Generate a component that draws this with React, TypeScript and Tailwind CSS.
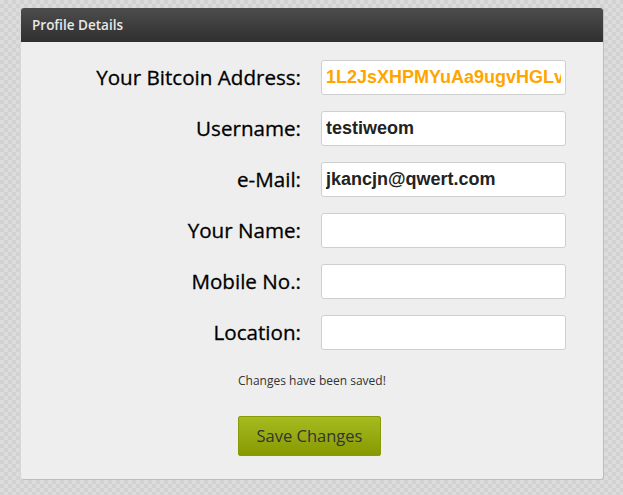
const fields = [
  { label: "Your Bitcoin Address:", value: "1L2JsXHPMYuAa9ugvHGLvJ", orange: true },
  { label: "Username:", value: "testiweom" },
  { label: "e-Mail:", value: "jkancjn@qwert.com" },
  { label: "Your Name:", value: "" },
  { label: "Mobile No.:", value: "" },
  { label: "Location:", value: "" },
];

function App() {
  return (
    <div className="min-h-[495px] w-full bg-[repeating-conic-gradient(#d2d2d2_0_25%,#dcdcdc_0_50%)] bg-[length:8px_8px] pt-2 pl-[21px] font-['Open_Sans',sans-serif]">
      <div className="w-[583px] rounded-[3px] border-r border-b border-[#bdbdbd] bg-[#eeeeee]">
        <div className="flex h-[34px] items-center rounded-t-[3px] bg-gradient-to-b from-[#4d4d4d] to-[#2f2f2f] pl-[11px]">
          <span className="text-[13.5px] font-semibold text-[#e8e8e8]">Profile Details</span>
        </div>
        <form className="flex flex-col pt-[18px] pb-[23px]" onSubmit={(e) => e.preventDefault()}>
          <div className="flex flex-col gap-[16px]">
            {fields.map((f) => (
              <div key={f.label} className="flex items-center">
                <label className="w-[280px] text-right text-[20.6px] text-black [-webkit-text-stroke:0.3px_#000]">{f.label}</label>
                <input
                  type="text"
                  defaultValue={f.value}
                  className={
                    "ml-[20px] h-[35px] w-[245px] rounded-[3px] border border-[#cfcfcf] bg-white px-[4px] font-['Liberation_Sans',Arial,sans-serif] text-[18px] font-bold outline-none " +
                    (f.orange ? "text-[#ffa500]" : "text-[#222]")
                  }
                />
              </div>
            ))}
          </div>
          <div className="mt-[22px] pl-[217px] text-[12px] text-[#333]">Changes have been saved!</div>
          <div className="mt-[26px] pl-[217px]">
            <button
              type="submit"
              className="h-[40px] w-[143px] rounded-[2px] border border-[#889a08] bg-gradient-to-b from-[#a6bb1f] to-[#879900] text-[16.5px] text-[#333]"
            >
              Save Changes
            </button>
          </div>
        </form>
      </div>
    </div>
  );
}

export default App;
